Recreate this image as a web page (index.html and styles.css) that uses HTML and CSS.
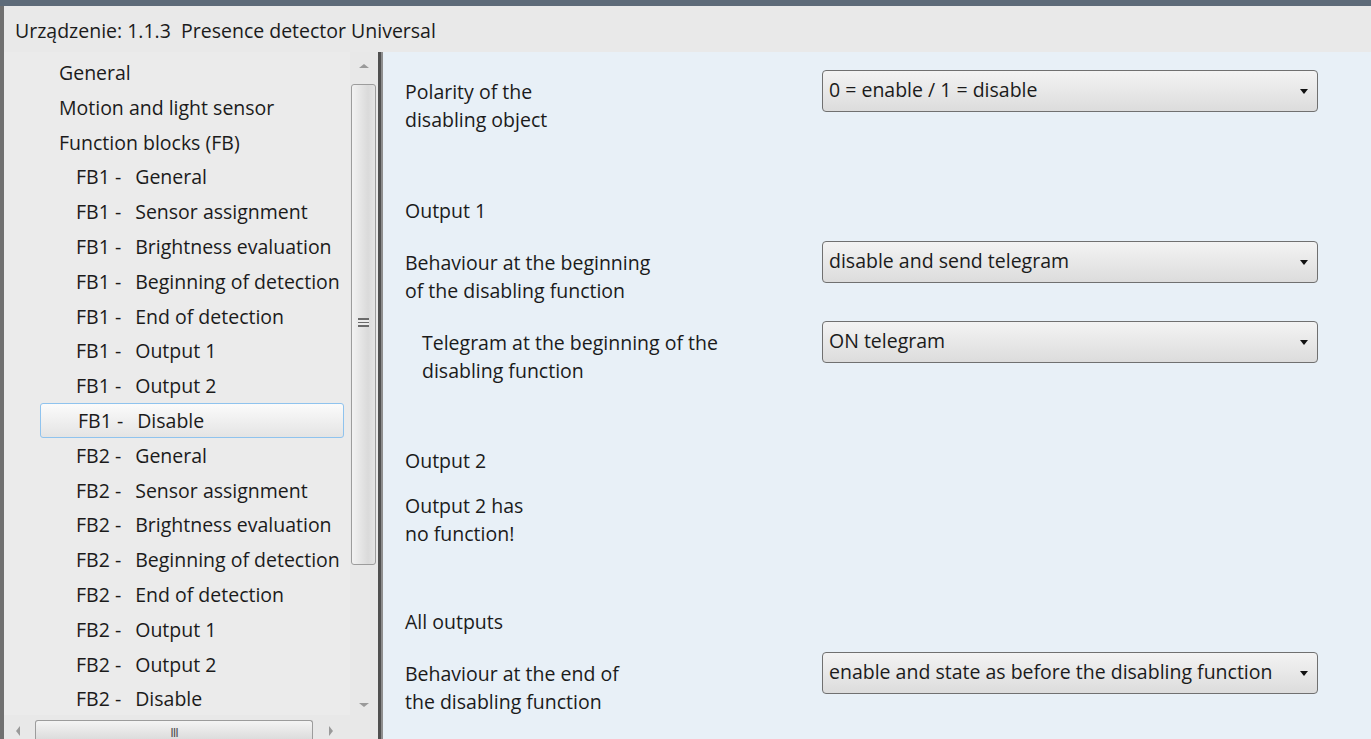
FILE: index.html
```html
<!DOCTYPE html>
<html lang="pl">
<head>
  <meta charset="UTF-8">
  <title>Presence detector Universal</title>
  <link rel="stylesheet" href="styles.css">
</head>
<body>
  <div class="window">
    <div class="top-strip"></div>
    <div class="device-title">Urządzenie: 1.1.3&nbsp; Presence detector Universal</div>

    <div class="main">
      <div class="side">
        <div class="side-body">
          <ul class="tree">
            <li class="lvl1">General</li>
            <li class="lvl1">Motion and light sensor</li>
            <li class="lvl1">Function blocks (FB)</li>
            <li class="lvl2"><span class="fb">FB1 -</span> General</li>
            <li class="lvl2"><span class="fb">FB1 -</span> Sensor assignment</li>
            <li class="lvl2"><span class="fb">FB1 -</span> Brightness evaluation</li>
            <li class="lvl2"><span class="fb">FB1 -</span> Beginning of detection</li>
            <li class="lvl2"><span class="fb">FB1 -</span> End of detection</li>
            <li class="lvl2"><span class="fb">FB1 -</span> Output 1</li>
            <li class="lvl2"><span class="fb">FB1 -</span> Output 2</li>
            <li class="lvl2 selected"><span class="fb">FB1 -</span> Disable</li>
            <li class="lvl2"><span class="fb">FB2 -</span> General</li>
            <li class="lvl2"><span class="fb">FB2 -</span> Sensor assignment</li>
            <li class="lvl2"><span class="fb">FB2 -</span> Brightness evaluation</li>
            <li class="lvl2"><span class="fb">FB2 -</span> Beginning of detection</li>
            <li class="lvl2"><span class="fb">FB2 -</span> End of detection</li>
            <li class="lvl2"><span class="fb">FB2 -</span> Output 1</li>
            <li class="lvl2"><span class="fb">FB2 -</span> Output 2</li>
            <li class="lvl2"><span class="fb">FB2 -</span> Disable</li>
          </ul>

          <div class="vscroll">
            <span class="arrow-up"></span>
            <div class="vthumb"><span class="grip"></span></div>
            <span class="arrow-down"></span>
          </div>
        </div>

        <div class="hscroll">
          <span class="arrow-left"></span>
          <div class="hthumb">III</div>
          <span class="arrow-right"></span>
        </div>
      </div>

      <div class="splitter"></div>

      <div class="params">
        <div class="param">
          <div class="label">Polarity of the<br>disabling object</div>
          <div class="combo">0 = enable / 1 = disable</div>
        </div>

        <div class="heading first">Output 1</div>
        <div class="param">
          <div class="label">Behaviour at the beginning<br>of the disabling function</div>
          <div class="combo">disable and send telegram</div>
        </div>
        <div class="param">
          <div class="label indent">Telegram at the beginning of the<br>disabling function</div>
          <div class="combo">ON telegram</div>
        </div>

        <div class="heading">Output 2</div>
        <div class="note">Output 2 has<br>no function!</div>

        <div class="heading">All outputs</div>
        <div class="param">
          <div class="label">Behaviour at the end of<br>the disabling function</div>
          <div class="combo">enable and state as before the disabling function</div>
        </div>
      </div>
    </div>
  </div>
</body>
</html>
```

FILE: styles.css
```css
/* Device parameter window */
html, body {
  margin: 0;
  height: 100%;
  overflow: hidden;
}

body {
  font-family: "Open Sans", "Noto Sans", sans-serif;
  font-size: 19.5px;
  color: #1b1b1b;
  background-color: #e9e9e9;
}

.window {
  display: flex;
  flex-direction: column;
  height: 739px;
  border-left: 4px solid #707070;
}

.top-strip {
  height: 6px;
  margin-left: -4px;
  background-color: #5e6b79;
}

.device-title {
  height: 46px;
  line-height: 50px;
  padding-left: 11px;
  background-color: #e9e9e9;
  white-space: nowrap;
}

.main {
  flex: 1;
  display: flex;
  min-height: 0;
}

/* Left tree panel */
.side {
  width: 373px;
  display: flex;
  flex-direction: column;
  background-color: #ebebeb;
}

.side-body {
  flex: 1;
  display: flex;
  min-height: 0;
}

.tree {
  flex: 1;
  list-style: none;
  margin: 0;
  padding: 3px 0 0 36px;
  overflow: hidden;
}

.tree li {
  height: 34.8px;
  line-height: 35px;
  white-space: nowrap;
  overflow: hidden;
  box-sizing: border-box;
  margin-right: 6px;
}

.tree .fb {
  margin-right: 9px;
}

.tree .lvl1 {
  padding-left: 19px;
}

.tree .lvl2 {
  padding-left: 36px;
}

.tree .selected {
  padding-left: 37px;
  border: 1px solid #8fc3ee;
  border-radius: 3px;
  line-height: 33px;
  background: linear-gradient(#fbfbfb, #e4e4e4);
}

.vscroll {
  width: 27px;
  display: flex;
  flex-direction: column;
  align-items: center;
  padding: 3px 0 0;
  box-sizing: border-box;
  background-color: #e8e8e8;
}

.arrow-up,
.arrow-down {
  width: 0;
  height: 0;
  border-left: 5px solid transparent;
  border-right: 5px solid transparent;
}

.arrow-up {
  margin: 9px 0 16px;
  border-bottom: 4px solid #9a9a9a;
}

.arrow-down {
  margin: 138px 0 0;
  border-top: 4px solid #9a9a9a;
}

.vthumb {
  width: 25px;
  height: 481px;
  box-sizing: border-box;
  border: 1px solid #9c9c9c;
  border-radius: 3px;
  background: linear-gradient(90deg, #f2f2f2, #dadada 70%, #e4e4e4);
  display: flex;
  align-items: center;
  justify-content: center;
}

.grip {
  width: 11px;
  height: 9px;
  border-top: 2px solid #6a6a6a;
  border-bottom: 2px solid #6a6a6a;
  box-sizing: border-box;
  position: relative;
  top: -2px;
  background: linear-gradient(#ebebeb 35%, #6a6a6a 35%, #6a6a6a 62%, #ebebeb 62%);
}

.hscroll {
  height: 24px;
  display: flex;
  align-items: flex-end;
  padding-left: 12px;
  background-color: #e8e8e8;
}

.arrow-left,
.arrow-right {
  width: 0;
  height: 0;
  margin-bottom: 3px;
  border-top: 5px solid transparent;
  border-bottom: 5px solid transparent;
}

.arrow-left {
  border-right: 4px solid #9a9a9a;
  margin-right: 15px;
}

.arrow-right {
  border-left: 4px solid #9a9a9a;
  margin-left: 16px;
}

.hthumb {
  width: 278px;
  height: 19px;
  box-sizing: border-box;
  border: 1px solid #9c9c9c;
  border-bottom: none;
  border-radius: 3px 3px 0 0;
  background: linear-gradient(#f4f4f4, #dcdcdc);
  text-align: center;
  font-family: "DejaVu Sans", sans-serif;
  font-size: 12px;
  line-height: 24px;
  letter-spacing: -1px;
  color: #555;
}

.splitter {
  width: 6px;
  background: linear-gradient(90deg, #e8e8e8 0, #e8e8e8 1px, #505050 1px, #505050 4px, #8e8e8e 4px);
}

/* Right parameter panel */
.params {
  flex: 1;
  padding: 18px 0 0 22px;
  background-color: #e8f0f7;
  line-height: 28px;
}

.param {
  display: flex;
  align-items: flex-start;
  margin-top: 16px;
}

.param:first-child {
  margin-top: 0;
}

.label {
  width: 417px;
  padding-top: 8px;
  flex-shrink: 0;
  white-space: nowrap;
}

.label.indent {
  width: 400px;
  padding-left: 17px;
}

.combo {
  width: 496px;
  height: 42px;
  box-sizing: border-box;
  padding-left: 6px;
  line-height: 38px;
  border: 1px solid #707070;
  border-radius: 4px;
  background: linear-gradient(#f3f3f3, #e9e9e9 45%, #dcdcdc);
  position: relative;
  white-space: nowrap;
}

.combo::after {
  content: "";
  position: absolute;
  right: 9px;
  top: 18px;
  border-left: 4px solid transparent;
  border-right: 4px solid transparent;
  border-top: 5px solid #111;
}

.heading {
  margin-top: 62px;
}

.heading.first {
  margin-top: 63px;
}

.note {
  margin-top: 17px;
}

.note + .heading {
  margin-top: 60px;
}

.heading + .param {
  margin-top: 16px;
}
```
